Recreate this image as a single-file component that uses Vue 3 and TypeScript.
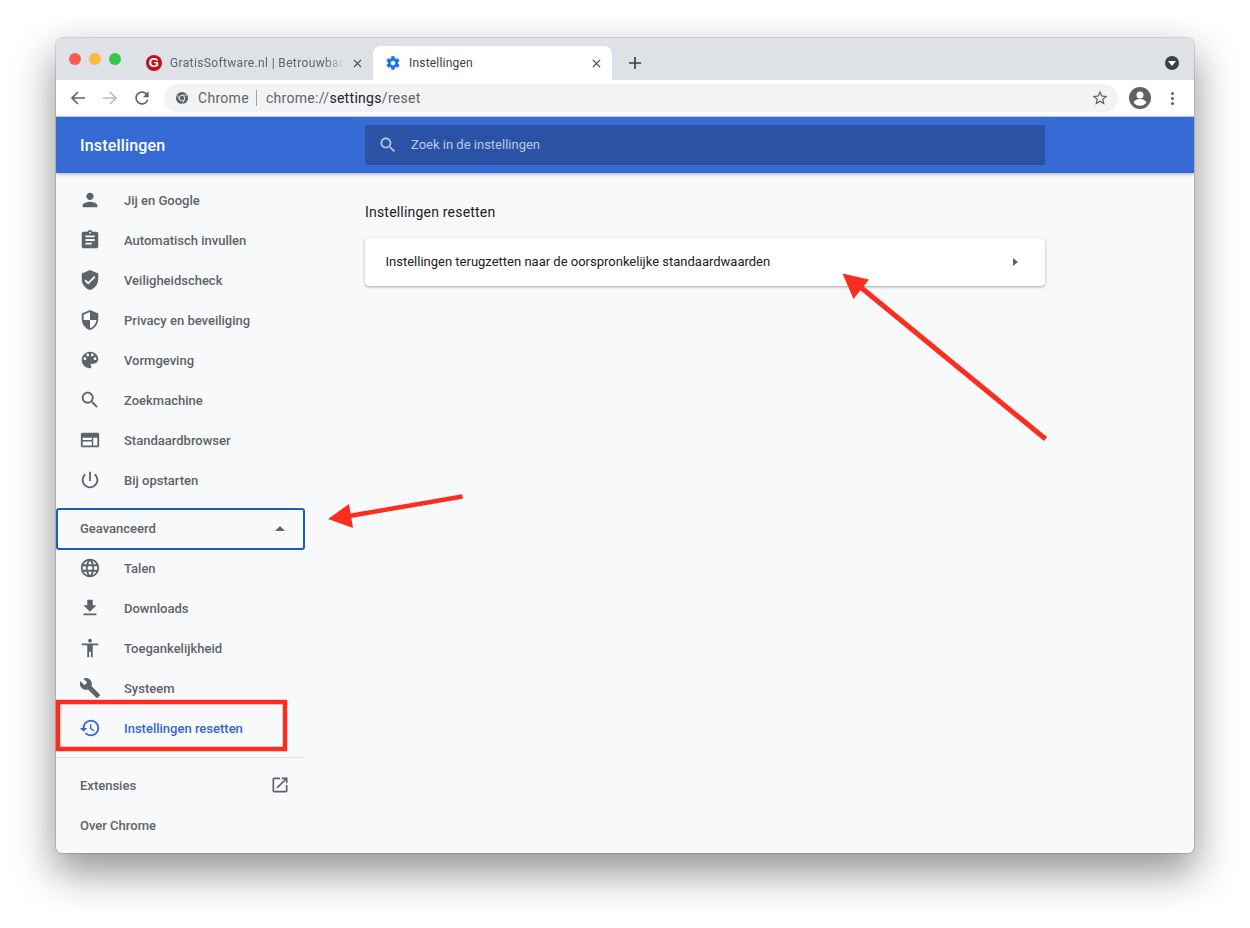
<script setup lang="ts">
interface NavItem { label: string; path: string; active?: boolean }
const ICONS = {
  person: 'M12 12c2.21 0 4-1.79 4-4s-1.79-4-4-4-4 1.79-4 4 1.79 4 4 4zm0 2c-2.67 0-8 1.34-8 4v2h16v-2c0-2.66-5.33-4-8-4z',
  clipboard: 'M19 3h-4.18C14.4 1.84 13.3 1 12 1c-1.3 0-2.4.84-2.82 2H5c-1.1 0-2 .9-2 2v14c0 1.1.9 2 2 2h14c1.1 0 2-.9 2-2V5c0-1.1-.9-2-2-2zm-7 0c.55 0 1 .45 1 1s-.45 1-1 1-1-.45-1-1 .45-1 1-1zm2 14H7v-2h7v2zm3-4H7v-2h10v2zm0-4H7V7h10v2z',
  verified: 'M12 1L3 5v6c0 5.55 3.84 10.74 9 12 5.16-1.26 9-6.45 9-12V5l-9-4zm-2 16l-4-4 1.41-1.41L10 14.17l6.59-6.59L18 9l-8 8z',
  security: 'M12 1L3 5v6c0 5.55 3.84 10.74 9 12 5.16-1.26 9-6.45 9-12V5l-9-4zm0 10.99h7c-.53 4.12-3.28 7.79-7 8.94V12H5V6.3l7-3.11v8.8z',
  palette: 'M12 3c-4.97 0-9 4.03-9 9s4.03 9 9 9c.83 0 1.5-.67 1.5-1.5 0-.39-.15-.74-.39-1.01-.23-.26-.38-.61-.38-.99 0-.83.67-1.5 1.5-1.5H16c2.76 0 5-2.24 5-5 0-4.42-4.03-8-9-8zm-5.5 9c-.83 0-1.5-.67-1.5-1.5S5.67 9 6.5 9 8 9.67 8 10.5 7.33 12 6.5 12zm3-4C8.67 8 8 7.33 8 6.5S8.67 5 9.5 5s1.5.67 1.5 1.5S10.33 8 9.5 8zm5 0c-.83 0-1.5-.67-1.5-1.5S13.67 5 14.5 5s1.5.67 1.5 1.5S15.33 8 14.5 8zm3 4c-.83 0-1.5-.67-1.5-1.5S16.67 9 17.5 9s1.5.67 1.5 1.5-.67 1.5-1.5 1.5z',
  search: 'M15.5 14h-.79l-.28-.27C15.41 12.59 16 11.11 16 9.5 16 5.91 13.09 3 9.5 3S3 5.91 3 9.5 5.91 16 9.5 16c1.61 0 3.09-.59 4.23-1.57l.27.28v.79l5 4.99L20.49 19l-4.99-5zm-6 0C7.01 14 5 11.99 5 9.5S7.01 5 9.5 5 14 7.01 14 9.5 11.99 14 9.5 14z',
  web: 'M20 4H4c-1.1 0-2 .9-2 2v12c0 1.1.9 2 2 2h16c1.1 0 2-.9 2-2V6c0-1.1-.9-2-2-2zM4 18V9.500h10V12H4v1.500h10V18H4zm16 0h-4.500V9.500H20V18z',
  power: 'M13 3h-2v10h2V3zm4.830 2.170l-1.420 1.420C17.990 7.860 19 9.810 19 12c0 3.870-3.130 7-7 7s-7-3.130-7-7c0-2.190 1.010-4.140 2.580-5.420L6.170 5.170C4.230 6.820 3 9.260 3 12c0 4.970 4.030 9 9 9s9-4.030 9-9c0-2.740-1.230-5.180-3.170-6.830z',
  globe: 'M11.990 2C6.470 2 2 6.480 2 12s4.470 10 9.990 10C17.520 22 22 17.520 22 12S17.520 2 11.990 2zm6.930 6h-2.950c-.32-1.250-.78-2.450-1.380-3.560 1.840.63 3.370 1.910 4.330 3.560zM12 4.040c.83 1.200 1.480 2.530 1.910 3.960h-3.820c.43-1.430 1.080-2.760 1.910-3.960zM4.260 14C4.100 13.360 4 12.690 4 12s.1-1.360.26-2h3.380c-.08.66-.14 1.320-.14 2 0 .68.06 1.340.14 2H4.260zm.82 2h2.950c.32 1.250.78 2.450 1.380 3.560-1.840-.63-3.370-1.900-4.330-3.560zm2.950-8H5.080c.96-1.660 2.490-2.930 4.330-3.560C8.810 5.550 8.350 6.750 8.030 8zM12 19.960c-.83-1.200-1.480-2.530-1.910-3.960h3.820c-.43 1.430-1.080 2.760-1.910 3.960zM14.340 14H9.660c-.09-.66-.16-1.320-.16-2 0-.68.07-1.350.16-2h4.680c.09.65.16 1.320.16 2 0 .68-.07 1.340-.16 2zm.25 5.560c.6-1.110 1.060-2.310 1.380-3.560h2.950c-.96 1.650-2.490 2.930-4.330 3.560zM16.360 14c.08-.66.14-1.320.14-2 0-.68-.06-1.340-.14-2h3.380c.16.64.26 1.310.26 2s-.1 1.360-.26 2h-3.380z',
  download: 'M19 9h-4V3H9v6H5l7 7 7-7zM5 18v2h14v-2H5z',
  accessibility: 'M12 2c1.100 0 2 .9 2 2s-.9 2-2 2-2-.9-2-2 .9-2 2-2zm9 7h-6v13h-2v-6h-2v6H9V9H3V7h18v2z',
  build: 'M22.700 19l-9.100-9.100c.9-2.300.4-5-1.500-6.900-2-2-5-2.400-7.400-1.300L9 6 6 9 1.600 4.700C.4 7.100.9 10.100 2.900 12.100c1.900 1.900 4.600 2.400 6.900 1.500l9.100 9.100c.4.4 1 .4 1.400 0l2.300-2.300c.5-.4.5-1.100.1-1.400z',
  restore: 'M13 3c-4.970 0-9 4.030-9 9H1l3.890 3.890.07.14L9 12H6c0-3.870 3.130-7 7-7s7 3.130 7 7-3.130 7-7 7c-1.930 0-3.680-.79-4.940-2.060l-1.420 1.420C8.270 19.990 10.510 21 13 21c4.970 0 9-4.030 9-9s-4.030-9-9-9zm-1 5v5l4.280 2.540.72-1.210-3.500-2.080V8H12z',
  open: 'M19 19H5V5h7V3H5c-1.110 0-2 .9-2 2v14c0 1.100.89 2 2 2h14c1.100 0 2-.9 2-2v-7h-2v7zM14 3v2h3.590l-9.830 9.830 1.410 1.410L19 6.410V10h2V3h-7z',
  gear: 'M19.430 12.980c.04-.32.07-.64.07-.98s-.03-.66-.07-.98l2.110-1.650c.19-.15.24-.42.12-.64l-2-3.460c-.12-.22-.39-.3-.61-.22l-2.490 1c-.52-.4-1.080-.73-1.690-.98l-.38-2.650C14.460 2.180 14.250 2 14 2h-4c-.25 0-.46.18-.49.42l-.38 2.650c-.61.25-1.170.59-1.690.98l-2.490-1c-.23-.09-.49 0-.61.22l-2 3.460c-.13.22-.07.49.12.64l2.110 1.650c-.04.32-.07.65-.07.98s.03.66.07.98l-2.110 1.650c-.19.15-.24.42-.12.64l2 3.460c.12.22.39.3.61.22l2.490-1c.52.4 1.080.73 1.690.98l.38 2.650c.03.24.24.42.49.42h4c.25 0 .46-.18.49-.42l.38-2.650c.61-.25 1.170-.59 1.690-.98l2.490 1c.23.09.49 0 .61-.22l2-3.460c.12-.22.07-.49-.12-.64l-2.110-1.650zM12 15.500c-1.930 0-3.500-1.570-3.500-3.500s1.570-3.500 3.500-3.500 3.500 1.570 3.500 3.500-1.570 3.500-3.500 3.500z',
}
const basicItems: NavItem[] = [
  { label: 'Jij en Google', path: ICONS.person },
  { label: 'Automatisch invullen', path: ICONS.clipboard },
  { label: 'Veiligheidscheck', path: ICONS.verified },
  { label: 'Privacy en beveiliging', path: ICONS.security },
  { label: 'Vormgeving', path: ICONS.palette },
  { label: 'Zoekmachine', path: ICONS.search },
  { label: 'Standaardbrowser', path: ICONS.web },
  { label: 'Bij opstarten', path: ICONS.power },
]
const advancedItems: NavItem[] = [
  { label: 'Talen', path: ICONS.globe },
  { label: 'Downloads', path: ICONS.download },
  { label: 'Toegankelijkheid', path: ICONS.accessibility },
  { label: 'Systeem', path: ICONS.build },
  { label: 'Instellingen resetten', path: ICONS.restore, active: true },
]
</script>

<template>
  <div class="page">
    <div class="window">
      <div class="tabstrip">
        <div class="lights">
          <span class="light red"></span>
          <span class="light yellow"></span>
          <span class="light green"></span>
        </div>
        <div class="tab inactive">
          <span class="favicon">G</span>
          <span class="tab-title fade">GratisSoftware.nl | Betrouwbar</span>
          <svg class="tab-close" viewBox="0 0 10 10"><path d="M1 1l8 8M9 1l-8 8" /></svg>
        </div>
        <div class="tab current">
          <svg class="gear" viewBox="0 0 24 24"><path :d="ICONS.gear" /></svg>
          <span class="tab-title">Instellingen</span>
          <svg class="tab-close" viewBox="0 0 10 10"><path d="M1 1l8 8M9 1l-8 8" /></svg>
        </div>
        <svg class="newtab" viewBox="0 0 12 12"><path d="M6 0v12M0 6h12" /></svg>
        <div class="strip-spacer"></div>
        <span class="tab-search"><span class="tab-search-tri"></span></span>
      </div>

      <div class="toolbar">
        <svg class="tool back" viewBox="0 0 16 16"><path d="M15 8H2M8 2L2 8l6 6" /></svg>
        <svg class="tool fwd" viewBox="0 0 16 16"><path d="M1 8h13M8 2l6 6-6 6" /></svg>
        <svg class="tool reload" viewBox="0 0 24 24"><path d="M17.650 6.350A7.958 7.958 0 0 0 12 4c-4.420 0-7.990 3.580-7.990 8s3.570 8 7.990 8c3.730 0 6.840-2.550 7.730-6h-2.080A5.990 5.990 0 0 1 12 18c-3.310 0-6-2.690-6-6s2.690-6 6-6c1.660 0 3.140.69 4.220 1.780L13 11h7V4l-2.350 2.350z" /></svg>
        <div class="omnibox">
          <svg class="chrome-icon" viewBox="0 0 16 16">
            <circle cx="8" cy="8" r="7" fill="#5f6368" />
            <circle cx="8" cy="8" r="3.400" fill="#f1f3f4" />
            <circle cx="8" cy="8" r="2.500" fill="#5f6368" />
            <path d="M8 4.600h6M5 9.700L2.200 4.600M11 9.700L8 15" stroke="#f1f3f4" stroke-width="0.800" fill="none" />
          </svg>
          <span class="chip">Chrome</span>
          <span class="omni-sep"></span>
          <span class="url">chrome://<b>settings</b>/reset</span>
          <svg class="star" viewBox="0 0 24 24"><path d="M22 9.240l-7.190-.62L12 2 9.190 8.630 2 9.240l5.460 4.730L5.820 21 12 17.270 18.180 21l-1.630-7.030L22 9.240zM12 15.400l-3.760 2.270 1-4.280-3.320-2.880 4.380-.38L12 6.100l1.710 4.040 4.380.38-3.320 2.880 1 4.280L12 15.400z" /></svg>
        </div>
        <svg class="avatar" viewBox="0 0 22 22">
          <circle cx="11" cy="11" r="11" fill="#5f6368" />
          <circle cx="11" cy="8" r="3.500" fill="#fff" />
          <path d="M4.500 15.500c1-2.400 4-3.500 6.500-3.500s5.500 1.100 6.500 3.500c-1.400 2-3.800 3.300-6.500 3.300s-5.100-1.300-6.500-3.300z" fill="#fff" />
        </svg>
        <div class="menu-dots"><i></i><i></i><i></i></div>
      </div>

      <header class="header">
        <div class="brand">Instellingen</div>
        <div class="search">
          <svg class="search-icon" viewBox="0 0 24 24"><path :d="ICONS.search" /></svg>
          <span class="search-label">Zoek in de instellingen</span>
        </div>
      </header>

      <div class="body">
        <nav class="sidebar">
          <a v-for="item in basicItems" :key="item.label" class="nav-row">
            <svg class="nav-icon" viewBox="0 0 24 24"><path :d="item.path" fill-rule="evenodd" /></svg>
            <span>{{ item.label }}</span>
          </a>
          <button class="advanced">
            <span class="advanced-label">Geavanceerd</span>
            <span class="caret"></span>
          </button>
          <a v-for="item in advancedItems" :key="item.label" class="nav-row" :class="{ active: item.active }">
            <svg class="nav-icon" viewBox="0 0 24 24"><path :d="item.path" /></svg>
            <span>{{ item.label }}</span>
          </a>
          <div class="nav-sep"></div>
          <a class="plain-row">
            <span>Extensies</span>
            <svg class="ext-icon" viewBox="0 0 24 24"><path :d="ICONS.open" /></svg>
          </a>
          <a class="plain-row">Over Chrome</a>
        </nav>
        <main class="content">
          <h2 class="section-title">Instellingen resetten</h2>
          <div class="card">
            <span class="card-label">Instellingen terugzetten naar de oorspronkelijke standaardwaarden</span>
            <span class="card-caret"></span>
          </div>
        </main>
      </div>
    </div>

    <svg class="marks" viewBox="0 0 1250 928" width="1250" height="928">
      <rect x="58" y="702" width="227" height="47" fill="none" stroke="#fc2c1e" stroke-width="4.500" />
      <path d="M462.500 496.500L349 516" stroke="#fc2c1e" stroke-width="4.500" fill="none" />
      <path d="M328 519L349 504 353 528z" fill="#fc2c1e" />
      <path d="M1045.500 439L858 285" stroke="#fc2c1e" stroke-width="5" fill="none" />
      <path d="M842.500 273.500L869 279.500 853.500 299z" fill="#fc2c1e" />
    </svg>
  </div>
</template>

<style>
html, body { margin: 0; background: #fff; }
</style>

<style scoped>
.page {
  position: relative;
  width: 1250px;
  height: 928px;
  overflow: hidden;
  padding: 38px 56px 0;
  box-sizing: border-box;
  background: #fff;
  font-family: Roboto, "Liberation Sans", sans-serif;
}
.window {
  width: 1138px;
  height: 815px;
  display: flex;
  flex-direction: column;
  border-radius: 6px;
  background: #f8f9fa;
  overflow: hidden;
  box-shadow: 0 0 0 1px rgba(0, 0, 0, 0.12), 0 18px 40px 2px rgba(0, 0, 0, 0.42);
}
.tabstrip {
  height: 42px;
  flex: none;
  background: #dee1e6;
  display: flex;
  align-items: flex-end;
  box-sizing: border-box;
}
.lights {
  width: 83px;
  padding-left: 13px;
  box-sizing: border-box;
  align-self: flex-start;
  display: flex;
  gap: 8px;
  padding-top: 15px;
}
.light { width: 12px; height: 12px; border-radius: 50%; }
.red { background: #fc5a52; }
.yellow { background: #fdb83f; }
.green { background: #34c749; }
.tab {
  height: 34px;
  display: flex;
  align-items: center;
  box-sizing: border-box;
  font-size: 12px;
  letter-spacing: 0.2px;
  color: #5f6368;
}
.tab.inactive { width: 234px; padding-left: 7px; letter-spacing: 0.36px; }
.tab.current {
  width: 239px;
  padding-left: 12px;
  background: #fff;
  border-radius: 8px 8px 0 0;
  color: #3c4043;
}
.favicon {
  width: 16px;
  height: 16px;
  flex: none;
  border-radius: 50%;
  background: #c20f1f;
  color: #fff;
  font: 700 13px/16px "Liberation Sans", sans-serif;
  text-align: center;
  margin-right: 8px;
}
.gear { width: 16px; height: 16px; flex: none; fill: #1a73e8; margin-right: 8px; }
.tab-title { white-space: nowrap; overflow: hidden; flex: 1; }
.fade { -webkit-mask-image: linear-gradient(90deg, #000 88%, transparent 100%); mask-image: linear-gradient(90deg, #000 88%, transparent 100%); }
.tab-close { width: 9px; height: 9px; flex: none; margin: 0 11px 0 8px; fill: none; stroke: #45484c; stroke-width: 1.400; }
.newtab { width: 12px; height: 12px; margin: 0 0 11px 17px; fill: none; stroke: #3c4043; stroke-width: 1.700; flex: none; }
.strip-spacer { flex: 1; }
.tab-search {
  width: 14px;
  height: 14px;
  border-radius: 50%;
  background: #3c4043;
  margin: 0 15px 10px 0;
  display: flex;
  align-items: center;
  justify-content: center;
}
.tab-search-tri { border: 4px solid transparent; border-top: 5px solid #fff; border-bottom: 0; }
.toolbar {
  height: 37px;
  flex: none;
  box-sizing: border-box;
  background: #fff;
  border-bottom: 1px solid #d5d7da;
  display: flex;
  align-items: center;
  padding-left: 14px;
}
.tool { width: 16px; height: 16px; flex: none; fill: none; stroke-width: 1.700; }
.back { stroke: #5f6368; }
.fwd { stroke: #b9bcc0; margin-left: 16px; }
.reload { fill: #5f6368; stroke: none; width: 20px; height: 20px; margin-left: 14px; }
.omnibox {
  width: 954px;
  height: 28px;
  margin-left: 12px;
  border-radius: 14px;
  background: #f1f3f4;
  display: flex;
  align-items: center;
  padding: 0 9px 0 11px;
  box-sizing: border-box;
  font-size: 14px;
  color: #5f6368;
  flex: none;
}
.chrome-icon { width: 14px; height: 14px; flex: none; margin-right: 9px; }
.chip { letter-spacing: 0.3px; }
.omni-sep { width: 1px; height: 16px; background: #9aa0a6; margin: 0 9px 0 7px; }
.url { flex: 1; letter-spacing: 0.3px; }
.url b { font-weight: 400; color: #202124; }
.star { width: 18px; height: 18px; fill: #5f6368; flex: none; }
.avatar { width: 22px; height: 22px; flex: none; margin-left: 11px; }
.menu-dots { display: flex; flex-direction: column; gap: 2px; margin-left: 20px; }
.menu-dots i { width: 3px; height: 3px; border-radius: 50%; background: #5f6368; display: block; }
.header {
  height: 56px;
  flex: none;
  background: #366ad4;
  display: flex;
  align-items: center;
  box-shadow: 0 1px 4px rgba(0, 0, 0, 0.3);
  position: relative;
  z-index: 1;
}
.brand {
  width: 309px;
  padding-left: 24px;
  box-sizing: border-box;
  font-size: 16px;
  font-weight: 500;
  letter-spacing: 0.18px;
  color: #fff;
}
.search {
  width: 680px;
  height: 40px;
  background: #2a52a5;
  border-radius: 2px;
  display: flex;
  align-items: center;
  padding-left: 13px;
  box-sizing: border-box;
  color: #bcc9e6;
  font-size: 13px;
}
.search-icon { width: 20px; height: 20px; fill: #bcc9e6; margin-right: 13px; }
.search-label { margin-top: -2px; }
.body { flex: 1; display: flex; min-height: 0; }
.sidebar { width: 250px; flex: none; padding-top: 7px; box-sizing: border-box; }
.nav-row, .plain-row {
  height: 40px;
  display: flex;
  align-items: center;
  font-size: 13px;
  font-weight: 500;
  color: #5f6368;
}
.nav-row { padding-left: 23px; }
.nav-icon { width: 22px; height: 22px; fill: #5f6368; margin-right: 23px; flex: none; }
.nav-row.active { color: #3367d6; }
.nav-row.active .nav-icon { fill: #3367d6; }
.plain-row { padding: 0 16px 0 24px; justify-content: space-between; }
.advanced {
  width: 249px;
  height: 42px;
  border: 2px solid #1a5fc0;
  border-radius: 3px;
  background: none;
  padding: 0 18px 0 22px;
  display: flex;
  align-items: center;
  justify-content: space-between;
  font: 500 13px Roboto, sans-serif;
  color: #5f6368;
  box-sizing: border-box;
  margin: 8px 0 -2px;
}
.advanced-label { margin-top: -2px; }
.caret { border: 5px solid transparent; border-bottom: 5px solid #5f6368; border-top: 0; margin-top: -2px; }
.nav-sep { height: 1px; width: 250px; background: #e0e2e5; margin: 9px 0 7px; }
.ext-icon { width: 20px; height: 20px; fill: #5f6368; }
.content { padding: 0 0 0 59px; }
.section-title {
  margin: 0;
  padding-top: 31px;
  font-size: 14px;
  line-height: 16px;
  font-weight: 400;
  color: #202124;
  letter-spacing: 0.2px;
}
.card {
  width: 680px;
  height: 48px;
  margin-top: 18px;
  background: #fff;
  border-radius: 4px;
  box-shadow: 0 1px 2px rgba(60, 64, 67, 0.3), 0 1px 3px 1px rgba(60, 64, 67, 0.12);
  display: flex;
  align-items: center;
  justify-content: space-between;
  padding: 0 27px 0 21px;
  box-sizing: border-box;
  font-size: 13px;
  color: #202124;
}
.card-label { margin-top: -2px; margin-left: -0.5px; }
.card-caret { border: 4px solid transparent; border-left: 5px solid #5f6368; border-right: 0; }
.marks { position: absolute; left: 0; top: 0; pointer-events: none; }
</style>
